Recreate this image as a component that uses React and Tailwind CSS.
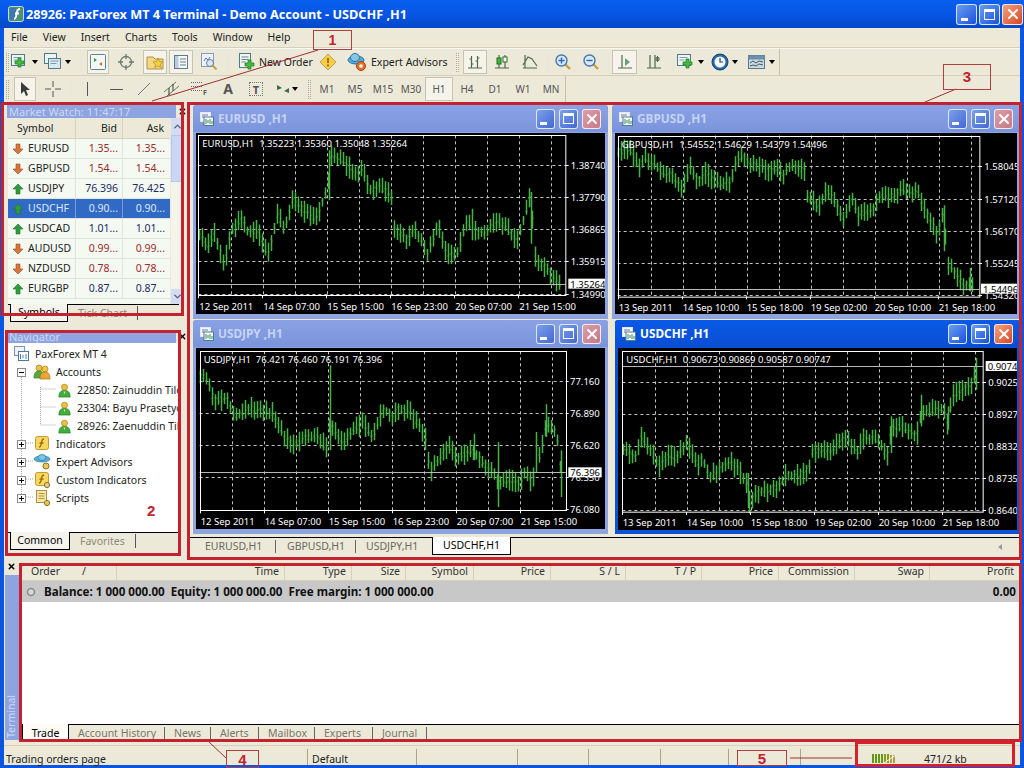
import React from 'react';
import { ChevronUp, ChevronDown, X } from 'lucide-react';

const CHARTS = {
  eur: {
    title: 'EURUSD ,H1',
    legend: 'EURUSD,H1  1.35223 1.35360 1.35048 1.35264',
    origin: [21, 98], size: [410, 181], plot: [28, 105, 1130, 585],
    hLines: [193, 290, 387, 483, 580], vLines: [127, 223, 319, 415, 511, 607, 703, 799, 895, 991, 1087],
    labelX: 1145,
    prices: ['1.38740', '1.37790', '1.36865', '1.35915', '1.34990'],
    last: { y: 550, text: '1.35264', box: [1138, 1250] },
    times: ['12 Sep 2011', '14 Sep 07:00', '15 Sep 15:00', '16 Sep 23:00', '20 Sep 07:00', '21 Sep 15:00'],
    timeY: 622, timeX: 28,
    seed: 71,
    points: [[30, 400], [55, 440], [75, 395], [105, 500], [125, 390], [160, 350], [175, 395], [205, 390], [235, 470], [265, 340], [285, 390], [310, 300], [350, 340], [380, 360], [415, 260], [425, 170], [460, 180], [495, 220], [520, 210], [540, 270], [570, 260], [605, 285], [615, 380], [650, 420], [675, 385], [715, 460], [745, 370], [770, 460], [800, 470], [830, 370], [880, 400], [930, 360], [985, 420], [1025, 280], [1035, 470], [1075, 510], [1115, 560]],
    spikes: [[421, 150, 300], [1027, 275, 430], [848, 325, 420]],
  },
  gbp: {
    title: 'GBPUSD ,H1',
    legend: 'GBPUSD,H1  1.54552 1.54629 1.54379 1.54496',
    origin: [20, 95], size: [402, 181], plot: [28, 103, 1112, 585],
    hLines: [195, 292, 388, 484, 580], vLines: [127, 223, 319, 415, 511, 607, 703, 799, 895, 991, 1087],
    labelX: 1128,
    prices: ['1.58045', '1.57120', '1.56170', '1.55245', '1.54320'],
    last: { y: 562, text: '1.54496', box: [1118, 1226] },
    times: ['13 Sep 2011', '14 Sep 10:00', '15 Sep 18:00', '19 Sep 02:00', '20 Sep 10:00', '21 Sep 18:00'],
    timeY: 622, timeX: 28,
    seed: 131,
    points: [[30, 150], [70, 150], [90, 200], [110, 170], [140, 190], [160, 215], [190, 215], [222, 270], [245, 200], [270, 240], [290, 215], [340, 250], [370, 235], [385, 175], [405, 165], [430, 190], [480, 205], [510, 200], [520, 225], [550, 190], [590, 210], [597, 285], [630, 315], [655, 265], [690, 320], [700, 360], [730, 295], [750, 340], [790, 330], [810, 285], [850, 285], [880, 265], [930, 275], [950, 330], [965, 350], [985, 400], [1005, 335], [1020, 490], [1055, 530], [1065, 555], [1085, 545], [1095, 565]],
    spikes: [[1007, 312, 450], [1085, 500, 570]],
  },
  jpy: {
    title: 'USDJPY ,H1',
    legend: 'USDJPY,H1  76.421 76.460 76.191 76.396',
    origin: [21, 93], size: [410, 181], plot: [32, 103, 1130, 580],
    hLines: [192, 288, 384, 480], vLines: [130, 226, 322, 418, 514, 610, 706, 802, 898, 994, 1090],
    labelX: 1143,
    prices: ['77.160', '76.890', '76.620', '76.350', '76.080'],
    last: { y: 466, text: '76.396', box: [1138, 1238] },
    times: ['12 Sep 2011', '14 Sep 07:00', '15 Sep 15:00', '16 Sep 23:00', '20 Sep 07:00', '21 Sep 15:00'],
    timeY: 618, timeX: 32,
    seed: 211,
    points: [[32, 170], [55, 190], [70, 245], [115, 250], [135, 300], [180, 275], [220, 280], [250, 290], [280, 350], [315, 385], [345, 360], [385, 360], [410, 395], [420, 320], [460, 380], [500, 330], [520, 320], [550, 360], [580, 275], [610, 300], [620, 275], [660, 285], [705, 350], [720, 470], [745, 430], [775, 385], [800, 425], [850, 400], [880, 440], [910, 460], [930, 500], [950, 490], [990, 495], [1005, 465], [1030, 500], [1035, 380], [1050, 420], [1070, 320], [1100, 350], [1115, 470]],
    spikes: [[423, 145, 400], [928, 375, 570], [1041, 345, 465], [1115, 400, 540], [1072, 262, 360], [855, 350, 430]],
  },
  chf: {
    title: 'USDCHF ,H1',
    legend: 'USDCHF,H1  0.90673 0.90869 0.90587 0.90747',
    origin: [25, 85], size: [402, 182], plot: [38, 95, 1120, 577],
    hLines: [187, 283, 379, 475, 571], vLines: [136, 232, 328, 424, 520, 616, 712, 808, 904, 1000, 1096],
    labelX: 1136,
    prices: ['0.90250', '0.89275', '0.88325', '0.87350', '0.86400'],
    last: { y: 139, text: '0.90747', box: [1128, 1235] },
    times: ['13 Sep 2011', '14 Sep 10:00', '15 Sep 18:00', '19 Sep 02:00', '20 Sep 10:00', '21 Sep 18:00'],
    timeY: 613, timeX: 36,
    seed: 307,
    points: [[40, 385], [75, 410], [92, 350], [120, 390], [150, 440], [175, 405], [195, 415], [230, 370], [265, 440], [275, 415], [300, 470], [360, 425], [385, 450], [410, 490], [415, 550], [440, 520], [510, 500], [525, 465], [560, 470], [598, 445], [605, 395], [660, 395], [705, 350], [740, 400], [760, 355], [805, 360], [830, 415], [845, 325], [875, 320], [920, 350], [935, 280], [1000, 265], [1015, 320], [1025, 230], [1090, 190], [1100, 125]],
    spikes: [[414, 460, 565], [844, 290, 400], [934, 225, 320], [1016, 260, 330], [1098, 115, 210]],
  },
};

const SYMBOLS = [
  { name: 'EURUSD', bid: '1.35...', ask: '1.35...', up: false },
  { name: 'GBPUSD', bid: '1.54...', ask: '1.54...', up: false },
  { name: 'USDJPY', bid: '76.396', ask: '76.425', up: true },
  { name: 'USDCHF', bid: '0.90...', ask: '0.90...', up: true, selected: true },
  { name: 'USDCAD', bid: '1.01...', ask: '1.01...', up: true },
  { name: 'AUDUSD', bid: '0.99...', ask: '0.99...', up: false },
  { name: 'NZDUSD', bid: '0.78...', ask: '0.78...', up: false },
  { name: 'EURGBP', bid: '0.87...', ask: '0.87...', up: true },
];

const COLUMNS = [
  ['Order', 'w-[97px] justify-start pl-[11px]'],
  ['Time', 'w-[168px] justify-end'],
  ['Type', 'w-[67px] justify-end'],
  ['Size', 'w-[54px] justify-end'],
  ['Symbol', 'w-[68px] justify-end'],
  ['Price', 'w-[77px] justify-end'],
  ['S / L', 'w-[75px] justify-end'],
  ['T / P', 'w-[76px] justify-end'],
  ['Price', 'w-[77px] justify-end'],
  ['Commission', 'w-[76px] justify-end'],
  ['Swap', 'w-[75px] justify-end'],
  ['Profit', 'w-[90px] justify-end'],
];

// green price bars, built from a hand traced outline of each chart
function buildBars(chart) {
  const { points, spikes, origin, seed } = chart;
  let s = seed;
  const rand = () => {
    s = (s * 16807) % 2147483647;
    return s / 2147483647;
  };
  const toX = (x) => (x - origin[0]) / 3;
  const toY = (y) => (y - origin[1]) / 3;
  let d = '';
  let seg = 0;
  for (let x = points[0][0]; x <= points[points.length - 1][0]; x += 9) {
    while (seg < points.length - 2 && x > points[seg + 1][0]) seg++;
    const [x0, y0] = points[seg];
    const [x1, y1] = points[seg + 1];
    const mid = y0 + ((y1 - y0) * (x - x0)) / (x1 - x0);
    const top = mid - 12 - rand() * 24;
    const bot = mid + 12 + rand() * 24;
    const px = Math.round(toX(x)) + 0.5;
    const o = toY(mid - 8 + rand() * 16);
    const c = toY(mid - 8 + rand() * 16);
    d += `M${px} ${toY(top).toFixed(1)}V${toY(bot).toFixed(1)}M${px - 1} ${o.toFixed(1)}H${px}M${px} ${c.toFixed(1)}H${px + 1}`;
  }
  spikes.forEach(([x, t, b]) => {
    d += `M${Math.round(toX(x)) + 0.5} ${toY(t).toFixed(1)}V${toY(b).toFixed(1)}`;
  });
  return d;
}

function Chart({ chart }) {
  const { origin, size, plot, hLines, vLines, prices, last } = chart;
  const X = (x) => (x - origin[0]) / 3;
  const Y = (y) => (y - origin[1]) / 3;
  const [pl, pt, pr, pb] = plot;
  return (
    <svg width={size[0]} height={size[1]} className="block bg-black shrink-0 text-[9.5px]">
      {hLines.map((y) => (
        <path key={y} d={`M${X(pl)} ${Math.round(Y(y)) + 0.5}H${X(pr)}`} stroke="#c4c4c4" strokeDasharray="3 3" />
      ))}
      {vLines.map((x) => (
        <path key={x} d={`M${Math.round(X(x)) + 0.5} ${Y(pt)}V${Y(pb)}`} stroke="#c4c4c4" strokeDasharray="3 3" />
      ))}
      <path d={buildBars(chart)} stroke="#48b248" strokeWidth="1.5" fill="none" />
      <path d={`M${X(pl)} ${Math.round(Y(last.y)) + 0.5}H${X(pr)}`} stroke="#b8b8b8" />
      <rect x={Math.round(X(pl)) + 0.5} y={Math.round(Y(pt)) + 0.5} width={(pr - pl) / 3} height={(pb - pt) / 3} fill="none" stroke="#ffffff" />
      <text x={X(pl) + 4} y={Y(pt) + 12} fill="#ffffff" xmlSpace="preserve">{chart.legend}</text>
      {prices.map((p, i) => (
        <g key={p}>
          <path d={`M${X(pr)} ${Math.round(Y(hLines[i] ?? pb - 5)) + 0.5}h3`} stroke="#ffffff" />
          <text x={X(chart.labelX)} y={Y(hLines[i] ?? pb - 5) + 4} fill="#ffffff">{p}</text>
        </g>
      ))}
      <rect x={X(last.box[0])} y={Y(last.y) - 5} width={(last.box[1] - last.box[0]) / 3} height="10" fill="#ffffff" />
      <text x={X(last.box[0]) + 2} y={Y(last.y) + 4} fill="#000000">{last.text}</text>
      {chart.times.map((t, i) => (
        <g key={t}>
          <path d={`M${Math.round(X(chart.timeX + i * 192)) + 0.5} ${Y(pb)}v3`} stroke="#ffffff" />
          <text x={X(chart.timeX + i * 192) + 1} y={Y(chart.timeY) + 2} fill="#ffffff">{t}</text>
        </g>
      ))}
    </svg>
  );
}

function WinButton({ kind, big, active }) {
  const size = big ? 'w-[21px] h-[21px]' : 'w-[19px] h-[20px]';
  const isClose = kind === 'close';
  const face = isClose
    ? active ? 'bg-gradient-to-br from-[#f0a080] to-[#d8431c]' : 'bg-gradient-to-br from-[#d8a0a8] to-[#c87888]'
    : active ? 'bg-gradient-to-br from-[#6a9cf4] to-[#1a50d8]' : 'bg-gradient-to-br from-[#7ba0ec] to-[#4468d0]';
  return (
    <div className={`${size} ${face} rounded-[3px] border border-white/80 flex items-center justify-center shrink-0`}>
      {kind === 'min' && <div className="w-[7px] h-[3px] bg-white self-end mb-[3px] mr-[5px]" />}
      {kind === 'max' && <div className="w-[11px] h-[11px] border border-white border-t-[3px]" />}
      {isClose && <X size={16} strokeWidth={3} color="#ffffff" />}
    </div>
  );
}

function WindowIcon() {
  return (
    <svg width="14" height="14" viewBox="0 0 14 14" className="shrink-0">
      <rect x="0.5" y="0.5" width="10" height="9" fill="#f4f4f4" stroke="#dfe8ff" />
      <rect x="4" y="5" width="9.5" height="8.5" fill="#ffffff" stroke="#4a7c8c" />
      <path d="M6 7v5M8 8v3M10 7v5M12 9v3" stroke="#2a8a5a" />
      <path d="M2 3h6M2 5h2" stroke="#6a7ab0" />
    </svg>
  );
}

function ChartWindow({ chart, active, className }) {
  return (
    <div className={`h-[214px] flex flex-col px-[3px] overflow-hidden rounded-t-[3px] ${active ? 'bg-[#0c50d4]' : 'bg-[#8ea4e0]'} ${className}`}>
      <div className={`h-[27px] shrink-0 -mx-[3px] px-[7px] flex items-center gap-[4px] ${active ? 'bg-gradient-to-b from-[#0a5ae8] to-[#0a4ed2]' : 'bg-gradient-to-b from-[#8aa2e4] to-[#7a94dc]'}`}>
        <WindowIcon />
        <span className={`text-[11.8px] font-bold whitespace-pre flex-1 ${active ? 'text-white' : 'text-[#c6d3f4]'}`}>{chart.title}</span>
        <div className="flex gap-[4px]">
          <WinButton kind="min" active={active} />
          <WinButton kind="max" active={active} />
          <WinButton kind="close" active={active} />
        </div>
      </div>
      <div className="mt-[1px] flex-1 overflow-hidden">
        <Chart chart={chart} />
      </div>
    </div>
  );
}

function Grip() {
  return <div className="w-[3px] h-[19px] mx-[2px] border-l border-r border-dotted border-[#b0ac98] shrink-0" />;
}

function Sep({ className }) {
  return (
    <div className={`flex justify-center shrink-0 ${className}`}>
      <div className="w-[1px] h-[21px] bg-[#c6c2ae] border-r border-white/60" />
    </div>
  );
}

function Tool({ className, pressed, children }) {
  return (
    <div className={`h-[24px] flex items-center justify-center gap-[2px] shrink-0 whitespace-nowrap ${pressed ? 'bg-[#f5f3ea] border border-[#c8c5b4]' : ''} ${className}`}>
      {children}
    </div>
  );
}

function Caret() {
  return <div className="w-0 h-0 border-l-[3px] border-r-[3px] border-t-[4px] border-l-transparent border-r-transparent border-t-black" />;
}

function Icon({ children, size = 18, box = 18 }) {
  return (
    <svg width={size} height={size} viewBox={`0 0 ${box} ${box}`} className="shrink-0">
      {children}
    </svg>
  );
}

const GreenPlus = ({ x = 8, y = 8 }) => (
  <path d={`M${x + 3} ${y}h3v3h3v3h-3v3h-3v-3h-3v-3h3z`} fill="#46b83c" stroke="#1f7a1f" strokeWidth="0.7" />
);

const ChartDoc = () => (
  <>
    <rect x="1.5" y="2.5" width="13" height="11" fill="#eef4f4" stroke="#4a7c8c" />
    <path d="M3.5 5.5h8M3.5 8h5" stroke="#7aa0a8" />
  </>
);

function ZoomIcon({ plus }) {
  return (
    <Icon>
      <path d="M11 11l5 5" stroke="#c8a040" strokeWidth="2.4" />
      <circle cx="7.5" cy="7.5" r="5.5" fill="#d8e8f8" stroke="#4878b0" strokeWidth="1.4" />
      <path d={plus ? 'M4.5 7.5h6M7.5 4.5v6' : 'M4.5 7.5h6'} stroke="#2a6ab0" strokeWidth="1.4" />
    </Icon>
  );
}

function PersonIcon() {
  return (
    <Icon size={15} box={16}>
      <circle cx="8" cy="4.5" r="3.2" fill="#f0c040" stroke="#a07818" strokeWidth="0.7" />
      <path d="M2 15c0-5 2-7 6-7s6 2 6 7z" fill="#3fae3f" stroke="#1e7a1e" strokeWidth="0.7" />
      <path d="M7 9l1 3 1-3z" fill="#ffe080" />
    </Icon>
  );
}

function TreeBox({ open }) {
  return (
    <div className="w-[9px] h-[9px] border border-[#8a8a8a] bg-white flex items-center justify-center relative shrink-0">
      <div className="w-[5px] h-[1px] bg-black" />
      {!open && <div className="w-[1px] h-[5px] bg-black absolute" />}
    </div>
  );
}

function FuncIcon({ gear }) {
  return (
    <Icon>
      <rect x="2.5" y="1.5" width="13" height="13" rx="2" fill="#f6d860" stroke="#c09a30" />
      <path d="M11 4c-2 0-2 1-2.5 3.5S8 12 6 12M6.5 8h4" stroke="#a06a10" strokeWidth="1.3" fill="none" />
      {gear && <circle cx="14" cy="14" r="2.6" fill="#e8d088" stroke="#907020" />}
    </Icon>
  );
}

function TreeRow({ indent, box, open, icon, label }) {
  return (
    <div className={`h-[18px] flex items-center whitespace-nowrap relative ${indent}`}>
      {box && <div className="w-[9px] mr-[7px]"><TreeBox open={open} /></div>}
      {icon}
      <span className="ml-[5px] text-[#222]">{label}</span>
    </div>
  );
}

function Navigator() {
  return (
    <div className="w-[171px] h-[189px] bg-white ml-[4px] overflow-hidden relative pt-[2px]">
      {/* dotted tree connectors */}
      <svg width="171" height="189" className="absolute left-0 top-0">
        <path d="M13.5 28V154M32.5 44V82M32.5 46H48M32.5 64H48M32.5 82H48M18 100H26M18 118H26M18 136H26M18 154H26" stroke="#a8a8a8" strokeDasharray="1 1" fill="none" />
      </svg>
      <div className="relative">
        <TreeRow indent="pl-[6px]" label="PaxForex MT 4" icon={
          <Icon size={16} box={16}>
            <rect x="0.5" y="0.5" width="10" height="9" fill="#f0f4fa" stroke="#7a90b8" />
            <rect x="4.5" y="5.5" width="10" height="9" fill="#ffffff" stroke="#4a7c8c" />
            <path d="M6.5 8v5M9 9v3M12 8v5" stroke="#4a80b8" />
          </Icon>
        } />
        <TreeRow indent="pl-[9px]" box open label="Accounts" icon={
          <Icon>
            <circle cx="6" cy="5" r="3" fill="#f0c040" stroke="#a07818" strokeWidth="0.7" />
            <path d="M1 15c0-5 1.500-7 5-7s5 2 5 7z" fill="#58a840" stroke="#3a7a20" strokeWidth="0.7" />
            <circle cx="12" cy="6" r="3" fill="#f4c848" stroke="#a07818" strokeWidth="0.7" />
            <path d="M7 16c0-5 1.500-7 5-7s5 2 5 7z" fill="#e8a830" stroke="#a07020" strokeWidth="0.7" />
          </Icon>
        } />
        <TreeRow indent="pl-[49px]" icon={<PersonIcon />} label="22850: Zainuddin Tiloi" />
        <TreeRow indent="pl-[49px]" icon={<PersonIcon />} label="23304: Bayu Prasetyo" />
        <TreeRow indent="pl-[49px]" icon={<PersonIcon />} label="28926: Zaenuddin Tiloi" />
        <TreeRow indent="pl-[9px]" box label="Indicators" icon={<FuncIcon />} />
        <TreeRow indent="pl-[9px]" box label="Expert Advisors" icon={
          <Icon>
            <ellipse cx="9" cy="6" rx="8" ry="3" fill="#58b0d8" stroke="#2878a0" strokeWidth="0.7" />
            <ellipse cx="9" cy="4.500" rx="4" ry="3" fill="#7ac4e4" stroke="#2878a0" strokeWidth="0.7" />
            <circle cx="13" cy="13" r="3" fill="#e8c858" stroke="#907020" />
          </Icon>
        } />
        <TreeRow indent="pl-[9px]" box label="Custom Indicators" icon={<FuncIcon gear />} />
        <TreeRow indent="pl-[9px]" box label="Scripts" icon={
          <Icon>
            <rect x="3.500" y="1.500" width="10" height="12" fill="#f4e8a8" stroke="#b09040" />
            <path d="M5.500 4.500h6M5.500 7h6M5.500 9.500h6" stroke="#b09040" />
            <circle cx="14" cy="14" r="2.600" fill="#e8c858" stroke="#907020" />
          </Icon>
        } />
      </div>
    </div>
  );
}

function MarketWatch() {
  return (
    <div className="h-[186px] ml-[4px] flex">
      <div className="w-[162px] bg-[#f4f9f2]">
        <div className="h-[21px] flex bg-[#ece9d8] text-[#222] border-b border-[#d6d2bc]">
          <div className="w-[68px] pl-[9px] leading-[20px] border-r border-[#d6d2bc]">Symbol</div>
          <div className="w-[47px] pr-[5px] leading-[20px] text-right border-r border-[#d6d2bc]">Bid</div>
          <div className="w-[47px] pr-[6px] leading-[20px] text-right">Ask</div>
        </div>
        {SYMBOLS.map((s) => {
          const price = s.selected ? 'text-[#dfe8f8]' : s.up ? 'text-[#1c2a66]' : 'text-[#9c2a2a]';
          return (
            <div key={s.name} className={`h-[20px] flex items-center border-b border-[#dfe3d8] ${s.selected ? 'bg-[#316ac5]' : ''}`}>
              <div className={`w-[68px] flex items-center gap-[4px] pl-[4px] border-r h-full ${s.selected ? 'text-[#dfe8f8] border-[#7a9ad8]' : 'text-[#222] border-[#dfe3d8]'}`}>
                <svg width="12" height="12" viewBox="0 0 12 12" className="shrink-0">
                  <path d={s.up ? 'M6 1l5 5H8v5H4V6H1z' : 'M6 11l5-5H8V1H4v5H1z'} fill={s.up ? '#2f9e3a' : '#d8743a'} stroke={s.up ? '#1f6e2a' : '#a04a20'} strokeWidth="0.6" />
                </svg>
                {s.name}
              </div>
              <div className={`w-[47px] text-right pr-[4px] border-r h-full leading-[19px] ${price} ${s.selected ? 'border-[#7a9ad8]' : 'border-[#dfe3d8]'}`}>{s.bid}</div>
              <div className={`w-[47px] text-right pr-[5px] leading-[19px] ${price}`}>{s.ask}</div>
            </div>
          );
        })}
      </div>
      <div className="w-[13px] ml-[1px] flex flex-col bg-[#f5f4ea]">
        <div className="h-[17px] bg-[#d4dcf4] flex items-center justify-center"><ChevronUp size={11} strokeWidth={3} color="#4d6185" /></div>
        <div className="h-[47px] bg-[#c8d6f8] border border-[#b8c8ec]" />
        <div className="flex-1" />
        <div className="h-[15px] bg-[#d4dcf4] flex items-center justify-center"><ChevronDown size={11} strokeWidth={3} color="#4d6185" /></div>
      </div>
    </div>
  );
}

function DockTitle({ children, className }) {
  return (
    <div className={`flex items-center ml-[3px] ${className}`}>
      <div className="w-[170px] h-[13px] bg-[#8ea4e0] text-[#cdd8f4] leading-[13px] pl-[2px] text-[11px]">{children}</div>
      <X size={9} strokeWidth={3.5} color="#000000" className="ml-[2px]" />
    </div>
  );
}

function SideTabs({ active, inactive, tabWidth }) {
  return (
    <div className="h-[18px] ml-[4px] border-t border-black flex items-start mr-[8px]">
      <div className={`-mt-[1px] ml-[2px] h-[18px] bg-[#f4f3ec] border-l border-r border-b border-black text-black leading-[17px] text-center shrink-0 ${tabWidth}`}>{active}</div>
      <div className="pl-[10px] pr-[10px] mt-[1px] h-[14px] leading-[14px] text-[#8a8a7a] border-r border-[#555] shrink-0">{inactive}</div>
    </div>
  );
}

function Overlays() {
  return (
    <>
      <svg width="1024" height="768" className="absolute left-0 top-0 pointer-events-none">
        <path d="M318 50L152 101M956 89L925 102M226 758L208 741M790 758H852" stroke="#a03030" fill="none" />
      </svg>
      <div className="absolute left-[1px] top-[102px] w-[183px] h-[214px] border-[3px] border-[#c4222e]" />
      <div className="absolute left-[5px] top-[330px] w-[176px] h-[226px] border-[3px] border-[#c4222e]" />
      <div className="absolute left-[187px] top-[102px] w-[835px] h-[458px] border-[3px] border-[#c4222e]" />
      <div className="absolute left-[19px] top-[563px] w-[1003px] h-[179px] border-[3px] border-[#c4222e]" />
      <div className="absolute left-[855px] top-[741px] w-[160px] h-[26px] border-[3px] border-[#d82028]" />
      <div className="absolute left-[313px] top-[30px] w-[39px] h-[20px] border border-[#b04040] text-[#c4222e] font-bold text-[14px] leading-[19px] text-center font-['Liberation_Sans',sans-serif]">1</div>
      <div className="absolute left-[943px] top-[64px] w-[48px] h-[26px] border border-[#b04040] text-[#c4222e] font-bold text-[15px] leading-[24px] text-center font-['Liberation_Sans',sans-serif]">3</div>
      <div className="absolute left-[226px] top-[750px] w-[33px] h-[18px] border border-[#b04040] text-[#c4222e] font-bold text-[15px] leading-[17px] text-center font-['Liberation_Sans',sans-serif]">4</div>
      <div className="absolute left-[737px] top-[750px] w-[50px] h-[16px] border border-[#b04040] text-[#c4222e] font-bold text-[15px] leading-[15px] text-center font-['Liberation_Sans',sans-serif]">5</div>
      <div className="absolute left-[147px] top-[503px] text-[#c4222e] font-bold text-[15px] font-['Liberation_Sans',sans-serif]">2</div>
    </>
  );
}

export default function App() {
  return (
    <div className="w-[1024px] h-[768px] relative overflow-hidden flex flex-col bg-[#0a56e0] text-[10.5px] leading-none font-['Noto_Sans',sans-serif] text-[#222]">
      {/* title bar */}
      <div className="h-[28px] shrink-0 flex items-center pl-[8px] pr-[1px] bg-gradient-to-b from-[#0a60ee] via-[#0655e4] to-[#0448c8]">
        <svg width="16" height="16" viewBox="0 0 16 16" className="shrink-0">
          <rect x="0.5" y="0.5" width="15" height="15" rx="2" fill="#4f8f72" stroke="#c8d8d0" />
          <rect x="2" y="2" width="6" height="12" fill="#3a7ab0" />
          <path d="M12 3c-3 0-3 2-3.500 5S8 13 6 13M7 7.500h4" stroke="#ffffff" strokeWidth="1.800" fill="none" />
        </svg>
        <span className="ml-[2px] text-[12.7px] font-bold text-white flex-1 whitespace-pre">28926: PaxForex MT 4 Terminal - Demo Account - USDCHF ,H1</span>
        <div className="flex gap-[2px]">
          <WinButton big active kind="min" />
          <WinButton big active kind="max" />
          <WinButton big active kind="close" />
        </div>
      </div>

      <div className="flex-1 flex flex-col mx-[4px] mb-[3px] bg-[#ece9d8] min-h-0">
        {/* menu */}
        <div className="h-[20px] shrink-0 flex items-center pl-[7px] gap-[15px] text-[#222] border-b border-[#d4d0bc]">
          {['File', 'View', 'Insert', 'Charts', 'Tools', 'Window', 'Help'].map((m) => (
            <span key={m}>{m}</span>
          ))}
        </div>

        {/* main toolbar */}
        <div className="h-[27px] shrink-0 flex items-center border-t border-white/70">
          <Grip />
          <div className="-ml-[3px] w-[1px]" />
          <Tool className="w-[30px]">
            <Icon size={20} box={20}><ChartDoc /><GreenPlus x={5} y={6} /></Icon>
            <Caret />
          </Tool>
          <Tool className="w-[36px]">
            <Icon size={20} box={20}>
              <rect x="1.500" y="1.500" width="12" height="10" fill="#eef4f4" stroke="#4a7c8c" />
              <rect x="5.500" y="6.500" width="12" height="10" fill="#dce8f0" stroke="#4a7c8c" />
              <path d="M7.500 9h8M7.500 11.500h6" stroke="#7aa0a8" />
            </Icon>
            <Caret />
          </Tool>
          <Sep className="w-[12px]" />
          <Tool pressed className="w-[22px]">
            <Icon>
              <rect x="1.500" y="1.500" width="15" height="15" rx="1" fill="#f4f8f4" stroke="#60848c" />
              <path d="M5 5l3 2-3 2z" fill="#3aa03a" />
              <path d="M13 9l-3 2 3 2z" fill="#d0702a" />
            </Icon>
          </Tool>
          <Tool className="w-[34px]">
            <Icon>
              <circle cx="9" cy="9" r="5.500" fill="none" stroke="#6a7a70" strokeWidth="1.300" />
              <path d="M9 1v5M9 12v5M1 9h5M12 9h5" stroke="#6a7a70" strokeWidth="1.300" />
            </Icon>
          </Tool>
          <Tool pressed className="w-[24px]">
            <Icon size={20} box={20}>
              <path d="M2 5h6l2 2h8v10H2z" fill="#f2d880" stroke="#b09040" />
              <path d="M13 6l1.600 3.500 3.400.4-2.500 2.300.7 3.500-3.200-1.800-3.200 1.800.7-3.500-2.500-2.300 3.400-.4z" fill="#f4d040" stroke="#a08020" strokeWidth="0.6" />
            </Icon>
          </Tool>
          <div className="w-[2px]" />
          <Tool pressed className="w-[24px]">
            <Icon>
              <rect x="2.500" y="2.500" width="13" height="13" fill="#f8fafa" stroke="#607a8c" />
              <rect x="3" y="3" width="3.500" height="12" fill="#b8cce4" />
              <path d="M8 6h6M8 9h6M8 12h6" stroke="#607a8c" />
            </Icon>
          </Tool>
          <Tool className="w-[32px]">
            <Icon size={20} box={20}>
              <rect x="2.500" y="1.500" width="12" height="13" fill="#eef2f8" stroke="#8a9ab8" />
              <path d="M5 9l2-3 2 2 2-3" stroke="#5a7ab0" fill="none" />
              <circle cx="11" cy="11" r="3.500" fill="#dce8f4" stroke="#6080a8" />
              <path d="M13.500 13.500l4 4" stroke="#c8a040" strokeWidth="2" />
            </Icon>
          </Tool>
          <Sep className="w-[6px]" />
          <Tool className="w-[84px] justify-start pl-[6px]">
            <Icon size={20} box={20}>
              <rect x="2.500" y="1.500" width="11" height="14" fill="#f4f4ec" stroke="#4a7c8c" />
              <path d="M4.500 5h7M4.500 7.500h7M4.500 10h4" stroke="#5a8a98" />
              <GreenPlus x={8} y={8} />
            </Icon>
            <span className="ml-[0px]">New Order</span>
          </Tool>
          <Tool className="w-[26px]">
            <Icon>
              <path d="M9 1l8 8-8 8-8-8z" fill="#f4d040" stroke="#b8a060" />
              <path d="M9 5v5M9 11.500v2" stroke="#b06010" strokeWidth="1.800" />
            </Icon>
          </Tool>
          <Tool className="w-[108px] justify-start pl-[6px]">
            <Icon size={20} box={20}>
              <ellipse cx="9" cy="8" rx="8" ry="4" fill="#58a8d8" stroke="#2878a0" />
              <ellipse cx="8" cy="5.500" rx="4.500" ry="4" fill="#88c4e8" stroke="#2878a0" />
              <circle cx="14" cy="14" r="4.500" fill="#e8702a" stroke="#a04010" />
              <circle cx="14" cy="14" r="1.800" fill="#ffffff" />
            </Icon>
            <span className="ml-[2px]">Expert Advisors</span>
          </Tool>
          <Sep className="w-[5px]" />
          <Grip />
          <div className="w-[2px]" />
          <Tool pressed className="w-[24px]">
            <Icon>
              <path d="M2 15h14M5.500 3v12M11.500 3v12M3.500 6h2M5.500 11h2M9.500 8h2M11.500 5h2" stroke="#4d6a4d" strokeWidth="1.200" fill="none" />
            </Icon>
          </Tool>
          <Tool className="w-[30px]">
            <Icon>
              <path d="M2 15h14M6 2v13M12 2v13" stroke="#4d6a4d" strokeWidth="1.200" />
              <rect x="4" y="5" width="4" height="6" fill="#46b83c" stroke="#1f6e1f" />
              <rect x="10" y="4" width="4" height="5" fill="#ffffff" stroke="#1f6e1f" />
            </Icon>
          </Tool>
          <Tool className="w-[26px]">
            <Icon>
              <path d="M2 15h14M4 2v13M2 12l5-8 4 2 5 7" stroke="#4d6a4d" strokeWidth="1.200" fill="none" />
            </Icon>
          </Tool>
          <Sep className="w-[8px]" />
          <Tool className="w-[24px]"><ZoomIcon plus /></Tool>
          <Tool className="w-[32px]"><ZoomIcon /></Tool>
          <Sep className="w-[4px]" />
          <div className="w-[1px]" />
          <Tool pressed className="w-[25px]">
            <Icon>
              <path d="M2 15h14M6 2v13" stroke="#4d6a4d" strokeWidth="1.200" />
              <path d="M9 5l5 4-5 4z" fill="#68a080" />
            </Icon>
          </Tool>
          <Tool className="w-[34px]">
            <Icon>
              <path d="M2 15h14M5 2v13M10 2v13" stroke="#4d6a4d" strokeWidth="1.200" />
              <path d="M12.500 3v6M10 6h5M11 4l3 4M14 4l-3 4" stroke="#4d6a4d" />
            </Icon>
          </Tool>
          <Sep className="w-[4px]" />
          <Tool className="w-[30px]">
            <Icon size={20} box={20}><ChartDoc /><GreenPlus x={7} y={7} /></Icon>
            <Caret />
          </Tool>
          <Tool className="w-[38px]">
            <Icon size={20} box={20}>
              <circle cx="10" cy="10" r="8" fill="#2a68a8" stroke="#16406c" />
              <circle cx="10" cy="10" r="5.500" fill="#f4f8fc" />
              <path d="M10 6v4h3" stroke="#16406c" strokeWidth="1.200" fill="none" />
            </Icon>
            <Caret />
          </Tool>
          <Tool className="w-[36px]">
            <Icon size={20} box={20}>
              <rect x="1.500" y="3.500" width="16" height="13" fill="#c8d8e4" stroke="#5a7a90" />
              <rect x="1.500" y="3.500" width="16" height="4" fill="#6a90ac" />
              <path d="M3 11l3-2 3 2 3-2 4 1M3 14l3-1 3 1 3-2 4 1" stroke="#4a5a50" fill="none" />
            </Icon>
            <Caret />
          </Tool>
          <div className="w-[1px] h-[26px] bg-[#c6c2ae] self-start" />
        </div>

        {/* drawing and timeframe toolbar */}
        <div className="h-[27px] shrink-0 flex items-center border-t border-[#d4d0bc] text-[10px] text-[#555]">
          <Grip />
          <div className="w-[3px]" />
          <Tool pressed className="w-[22px]">
            <svg width="14" height="16" viewBox="0 0 14 16"><path d="M3 1v12l3-3 2 5 2-1-2-5h4z" fill="#3a3a3a" /></svg>
          </Tool>
          <Tool className="w-[34px]">
            <svg width="16" height="16" viewBox="0 0 16 16"><path d="M8 0v6M8 10v6M0 8h6M10 8h6" stroke="#555" /></svg>
          </Tool>
          <Sep className="w-[2px]" />
          <Tool className="w-[30px]"><div className="w-[1px] h-[14px] bg-[#555]" /></Tool>
          <Tool className="w-[28px]"><div className="w-[13px] h-[1px] bg-[#555]" /></Tool>
          <Tool className="w-[28px]">
            <svg width="14" height="14"><path d="M1 13L13 1" stroke="#777" /></svg>
          </Tool>
          <Tool className="w-[28px]">
            <svg width="18" height="18"><path d="M1 12L13 2M4 16L16 6" stroke="#5a8060" /><path d="M6 8v7M10 4v7" stroke="#3a3a3a" /></svg>
          </Tool>
          <Tool className="w-[28px]">
            <svg width="18" height="18" className="text-[7px]">
              <path d="M0 2.500h12M0 6.500h12M0 10.500h12" stroke="#666" strokeDasharray="1 1" />
              <text x="12" y="15" fill="#555" className="font-bold">F</text>
            </svg>
          </Tool>
          <Tool className="w-[28px]"><span className="text-[14px] font-bold text-[#555]">A</span></Tool>
          <Tool className="w-[28px]">
            <div className="w-[14px] h-[14px] border border-dotted border-[#777] flex items-center justify-center text-[11px] font-bold text-[#555]">T</div>
          </Tool>
          <Tool className="w-[34px]">
            <svg width="14" height="14"><path d="M1 3l5 3-5 2zM13 6l-5 3 5 2z" fill="#3a6a4a" /></svg>
            <Caret />
          </Tool>
          <Sep className="w-[2px]" />
          <Grip />
          {['M1', 'M5', 'M15', 'M30', 'H1', 'H4', 'D1', 'W1', 'MN'].map((t) => (
            <Tool key={t} pressed={t === 'H1'} className="w-[28px]">{t}</Tool>
          ))}
          <div className="w-[1px] h-[26px] bg-[#c6c2ae] self-start" />
        </div>

        {/* docks and charts */}
        <div className="h-[458px] shrink-0 flex">
          <div className="w-[183px] shrink-0 flex flex-col">
            <DockTitle className="mt-[3px]">Market Watch: 11:47:17</DockTitle>
            <MarketWatch />
            <SideTabs active="Symbols" inactive="Tick Chart" tabWidth="w-[58px]" />
            <div className="h-[8px]" />
            <DockTitle>Navigator</DockTitle>
            <Navigator />
            <SideTabs active="Common" inactive="Favorites" tabWidth="w-[60px]" />
          </div>
          <div className="flex-1 flex flex-col min-w-0">
            <div className="h-[432px] pt-[3px] pl-[6px] grid grid-cols-[415px_1fr] gap-x-[4px] gap-y-[1px] content-start overflow-hidden">
              <ChartWindow chart={CHARTS.eur} />
              <ChartWindow chart={CHARTS.gbp} />
              <ChartWindow chart={CHARTS.jpy} />
              <ChartWindow chart={CHARTS.chf} active className="ml-[3px]" />
            </div>
            <div className="h-[22px] border-t border-black mt-[3px] relative flex items-start text-[#6a6a5c]">
              <div className="w-[18px]" />
              <span className="w-[70px] mt-[3px]">EURUSD,H1</span>
              <div className="w-[1px] h-[13px] mt-[2px] bg-[#666] mr-[11px]" />
              <span className="w-[68px] mt-[3px]">GBPUSD,H1</span>
              <div className="w-[1px] h-[13px] mt-[2px] bg-[#666] mr-[10px]" />
              <span className="w-[66px] mt-[3px]">USDJPY,H1</span>
              <div className="-mt-[1px] h-[18px] w-[79px] bg-white border-l border-r border-b border-black text-black text-center leading-[17px]">USDCHF,H1</div>
              <div className="absolute left-[811px] top-[6px] w-0 h-0 border-t-[3px] border-b-[3px] border-r-[4px] border-t-transparent border-b-transparent border-r-[#999]" />
            </div>
          </div>
        </div>

        {/* terminal */}
        <div className="h-[185px] shrink-0 flex">
          <div className="w-[15px] shrink-0 flex flex-col items-center">
            <X size={9} strokeWidth={4} color="#000000" className="mt-[2px] mb-[4px]" />
            <div className="flex-1 w-[14px] bg-[#8ea4e0] flex items-end justify-center overflow-hidden mb-[5px]">
              <span className="text-[#cdd8f4] [writing-mode:vertical-rl] rotate-180 pb-[1px] pt-[2px]">Terminal</span>
            </div>
          </div>
          <div className="w-[1px] bg-[#ece9d8]" />
          <div className="flex-1 flex flex-col min-w-0">
            <div className="h-[18px] mt-[3px] flex text-[#333] bg-[#ece9d8] border-b border-[#d4d0bc] shrink-0">
              {COLUMNS.map(([label, cls], i) => (
                <div key={i} className={`${cls} flex items-center pr-[5px] border-r border-[#d4d0bc] shrink-0 gap-[22px]`}>
                  <span>{label}</span>
                  {label === 'Order' && <span>/</span>}
                </div>
              ))}
            </div>
            <div className="h-[21px] bg-[#c8c8c8] flex items-center shrink-0 font-bold text-[11.6px] text-[#111]">
              <svg width="10" height="10" className="ml-[6px] mr-[8px] shrink-0">
                <circle cx="5" cy="5" r="3.500" fill="#d8d8d8" stroke="#8a8a8a" strokeWidth="1.500" />
              </svg>
              <span className="whitespace-pre flex-1">Balance: 1 000 000.00  Equity: 1 000 000.00  Free margin: 1 000 000.00</span>
              <span className="pr-[4px]">0.00</span>
            </div>
            <div className="flex-1 bg-white border-b border-black" />
            <div className="h-[20px] shrink-0 flex items-start text-[#77776a]">
              <div className="-mt-[1px] ml-[2px] h-[18px] w-[47px] bg-[#fdfcf6] border-l border-r border-b border-black text-black text-center leading-[18px] shrink-0">Trade</div>
              {[
                ['Account History', 'w-[96px]'],
                ['News', 'w-[46px]'],
                ['Alerts', 'w-[48px]'],
                ['Mailbox', 'w-[56px]'],
                ['Experts', 'w-[58px]'],
                ['Journal', 'w-[54px]'],
              ].map(([t, w]) => (
                <div key={t} className={`${w} h-[13px] mt-[2px] pl-[9px] leading-[13px] border-r border-[#666] shrink-0 whitespace-nowrap`}>{t}</div>
              ))}
            </div>
          </div>
        </div>

        {/* status bar */}
        <div className="h-[20px] shrink-0 flex items-end border-t border-[#d4d0bc] text-[#222] relative">
          <span className="w-[303px] h-[16px] pl-[2px] pt-[5px] shrink-0">Trading orders page</span>
          <div className="w-[109px] h-[16px] border-l border-[#a8a490] pl-[4px] pt-[5px] shrink-0">Default</div>
          <div className="w-[101px] h-[16px] border-l border-[#a8a490] shrink-0" />
          <div className="w-[71px] h-[16px] border-l border-[#a8a490] shrink-0" />
          <div className="w-[72px] h-[16px] border-l border-[#a8a490] shrink-0" />
          <div className="w-[68px] h-[16px] border-l border-[#a8a490] shrink-0" />
          <div className="w-[72px] h-[16px] border-l border-[#a8a490] shrink-0" />
          <div className="w-[203px] h-[16px] border-l border-[#a8a490] pl-[71px] pt-[5px] flex items-start shrink-0">
            <svg width="24" height="9" className="shrink-0">
              <path d="M1 0v9M4 0v9M7 0v9M10 0v9" stroke="#5f9a10" strokeWidth="2" />
              <path d="M13 0v9M16 0v9" stroke="#8a9a10" strokeWidth="2" />
              <path d="M19 1v8M22 1v8" stroke="#a8a040" strokeWidth="2" />
              <path d="M12 9L24 1" stroke="#ffffff" />
            </svg>
            <span className="ml-[28px]">471/2 kb</span>
          </div>
        </div>
      </div>

      <Overlays />
    </div>
  );
}
